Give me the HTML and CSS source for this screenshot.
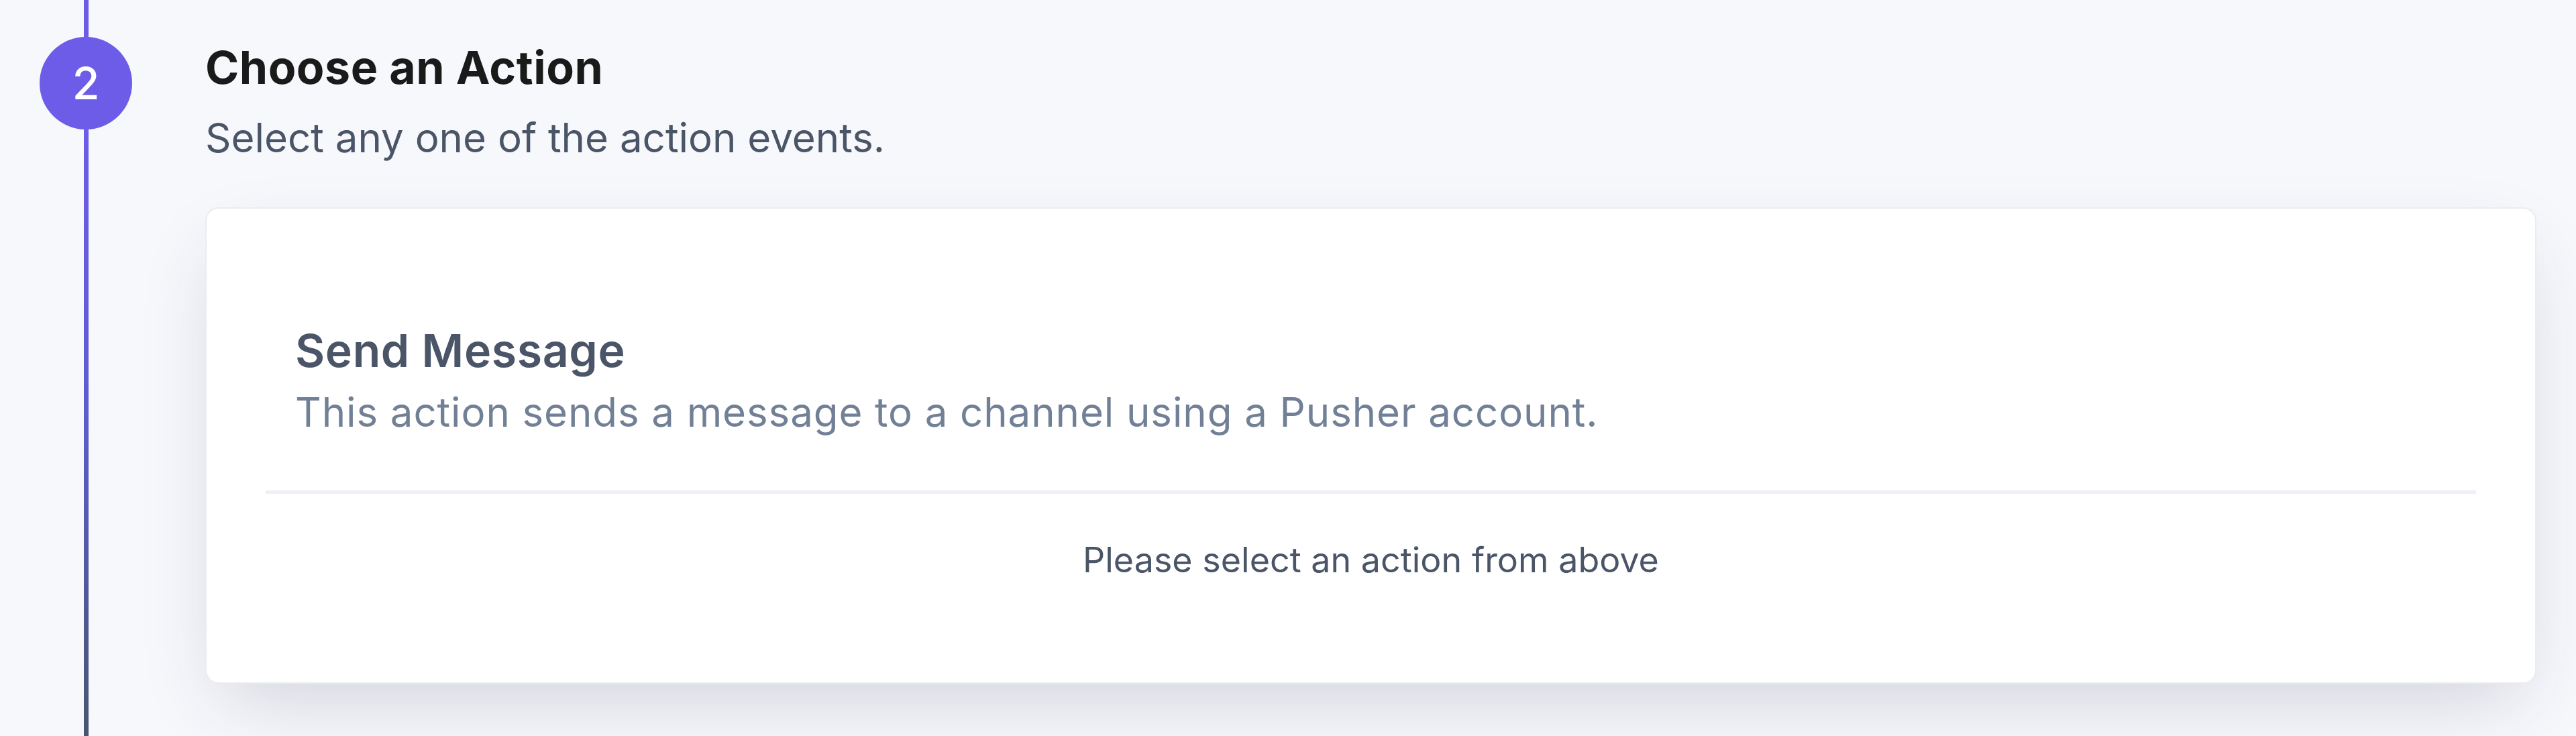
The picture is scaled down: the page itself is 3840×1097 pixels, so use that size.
FILE: index.html
```html
<!DOCTYPE html>
<html lang="en">
<head>
    <meta charset="UTF-8">
    <title>Choose an Action</title>
    <link rel="stylesheet" href="styles.css">
</head>
<body>
    <div class="step">
        <div class="timeline">
            <div class="line line-top"></div>
            <div class="step-number">2</div>
            <div class="line line-bottom"></div>
        </div>
        <div class="step-content">
            <h1 class="step-title">Choose an Action</h1>
            <p class="step-subtitle">Select any one of the action events.</p>
            <div class="card">
                <div class="action">
                    <h2 class="action-name">Send Message</h2>
                    <p class="action-desc">This action sends a message to a channel using a Pusher account.</p>
                </div>
                <div class="divider"></div>
                <div class="empty">Please select an action from above</div>
            </div>
        </div>
    </div>
</body>
</html>
```

FILE: styles.css
```css
html, body {
    margin: 0;
    padding: 0;
}
body {
    font-family: "Inter", "Noto Sans", sans-serif;
    background-color: #f7f8fc;
    overflow: hidden;
}
.step {
    display: flex;
    min-height: 100vh;
}
.timeline {
    display: flex;
    flex-direction: column;
    align-items: center;
    width: 138px;
    padding-left: 59px;
    flex-shrink: 0;
}
.line {
    width: 7px;
}
.line-top {
    height: 55px;
    background-color: #6c5ce7;
}
.line-bottom {
    flex: 1;
    background: linear-gradient(to bottom, #6c5ce7 0%, #5f5cd0 45%, #4a5570 100%);
}
.step-number {
    width: 138px;
    height: 138px;
    border-radius: 50%;
    background-color: #6c5ce7;
    color: #fff;
    font-size: 66px;
    font-weight: 500;
    display: flex;
    align-items: center;
    justify-content: center;
}
.step-content {
    flex: 1;
    padding-left: 109px;
    padding-right: 59px;
    padding-top: 59px;
}
.step-title {
    margin: 0;
    font-size: 68px;
    line-height: 82px;
    font-weight: 700;
    letter-spacing: 0.5px;
    color: #1a1a1a;
}
.step-subtitle {
    margin: 19px 0 0;
    font-size: 60px;
    line-height: 90px;
    color: #4a5568;
}
.card {
    margin-top: 59px;
    background-color: #fff;
    border: 2px solid #ebecf0;
    border-radius: 20px;
    padding: 0 88px;
    box-shadow: 0 45px 110px -25px rgba(40, 44, 70, 0.18);
}
.action {
    padding: 168px 44px 72px;
}
.action-name {
    margin: 0;
    font-size: 68px;
    line-height: 86px;
    font-weight: 600;
    letter-spacing: 0.6px;
    color: #4a5568;
}
.action-desc {
    margin: 4px 0 0;
    font-size: 60px;
    line-height: 90px;
    letter-spacing: 0.9px;
    color: #718096;
}
.divider {
    height: 5px;
    background-color: #edf0f7;
}
.empty {
    padding: 60px 0 143px;
    text-align: center;
    font-size: 52px;
    line-height: 78px;
    color: #4a5568;
}
```
